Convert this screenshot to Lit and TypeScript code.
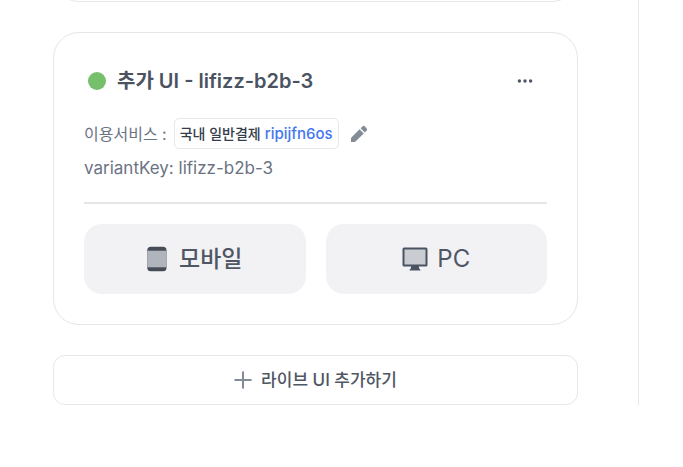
import { LitElement, html, css, svg } from "lit";
import { customElement, property } from "lit/decorators.js";

const icons = {
  more: svg`<svg width="18" height="18" viewBox="0 0 18 18" fill="currentColor" aria-hidden="true"><circle cx="3.4" cy="9" r="1.700"/><circle cx="9" cy="9" r="1.700"/><circle cx="14.600" cy="9" r="1.700"/></svg>`,
  pencil: svg`<svg width="18" height="18" viewBox="0 0 18 18" fill="currentColor" aria-hidden="true"><path d="M1 17v-3.500q0-.6.4-1L9.600 4.300 13.700 8.400l-8.200 8.200q-.4.4-1 .4z"/><path d="M10.600 3.300 12.600 1.300q1-.9 2 0l2.100 2.100q.9 1 0 2l-2 2z"/></svg>`,
  phone: svg`<svg width="20" height="26" viewBox="0 0 20 26" aria-hidden="true"><rect x=".3" y=".8" width="19.200" height="24.500" rx="3.500" fill="#464c58"/><path d="M.3 4.700h19.200v16.600H.3z" fill="#b0b4bd"/></svg>`,
  monitor: svg`<svg width="26" height="24" viewBox="0 0 26 24" aria-hidden="true"><path d="M9.500 18h7l.8 3.700q1.200.3 1.200 1.900h-11q0-1.600 1.200-1.900z" fill="#4a5361"/><rect x="1.500" y="1.600" width="23" height="17" rx=".6" fill="#c9cdd2" stroke="#4a5361" stroke-width="2"/></svg>`,
  plus: svg`<svg width="18" height="18" viewBox="0 0 18 18" fill="none" stroke="currentColor" stroke-width="2" stroke-linecap="round" aria-hidden="true"><path d="M1.200 9h15.600M9 1.200v15.600"/></svg>`,
};

const base = css`
  * { box-sizing: border-box; }
  button {
    margin: 0;
    padding: 0;
    border: 0;
    background: none;
    color: inherit;
    font: inherit;
    cursor: pointer;
  }
  svg { display: block; flex: none; }
`;

@customElement("ui-card")
class UiCard extends LitElement {
  @property() heading = "";
  @property() service = "";
  @property() code = "";
  @property() variant = "";

  static styles = [
    base,
    css`
      :host {
        display: block;
        padding: 30px;
        border: 1px solid #e5e6e8;
        border-radius: 26px;
        background: #fff;
      }
      .head {
        display: flex;
        align-items: center;
        height: 36px;
        padding: 0 13px 0 4px;
        gap: 11px;
      }
      .dot {
        width: 18px;
        height: 18px;
        border-radius: 50%;
        background: #75bf6d;
      }
      h2 {
        flex: 1;
        margin: 0;
        font-size: 20px;
        line-height: 30px;
        font-weight: 600;
        color: #4b5361;
      }
      .more { color: #4e5463; padding: 4px 0; }
      .info {
        margin-top: 19px;
        font-size: 16px;
        line-height: 24px;
        color: #6b7382;
      }
      .row { display: flex; align-items: center; gap: 7px; }
      .chip {
        display: flex;
        align-items: center;
        gap: 4px;
        height: 31px;
        padding: 0 5px;
        border: 1px solid #e5e6e8;
        border-radius: 5px;
        font-size: 14px;
        font-weight: 500;
        color: #333d4b;
      }
      .chip a { color: #4477ee; text-decoration: none; font-size: 15px; }
      .edit { margin-left: 4px; color: #828b96; }
      .variant { margin: 7px 0 0; font-size: 17px; }
      hr {
        height: 2px;
        margin: 22px 0 20px;
        border: 0;
        background: #e5e6e8;
      }
      .devices { display: grid; grid-template-columns: 1fr 1fr; gap: 20px; }
      .device {
        display: flex;
        align-items: center;
        justify-content: center;
        gap: 12px;
        height: 70px;
        border-radius: 18px;
        background: #f2f2f5;
        font-size: 23px;
        line-height: 36px;
        font-weight: 500;
        color: #505764;
      }
      .pc { gap: 9px; font-size: 24px; font-weight: 400; }
    `,
  ];

  render() {
    return html`
      <div class="head">
        <span class="dot"></span>
        <h2>${this.heading}</h2>
        <button class="more" aria-label="더보기">${icons.more}</button>
      </div>
      <div class="info">
        <div class="row">
          <span>이용서비스 :</span>
          <span class="chip"><span>${this.service}</span><a href="#service">${this.code}</a></span>
          <button class="edit" aria-label="수정">${icons.pencil}</button>
        </div>
        <p class="variant">variantKey: ${this.variant}</p>
      </div>
      <hr />
      <div class="devices">
        <button class="device">${icons.phone}<span>모바일</span></button>
        <button class="device pc">${icons.monitor}<span>PC</span></button>
      </div>
    `;
  }
}

@customElement("app-root")
class AppRoot extends LitElement {
  static styles = [
    base,
    css`
      :host {
        display: block;
        background: #fff;
        font-family: Inter, "Noto Sans CJK KR", sans-serif;
      }
      main {
        display: flex;
        flex-direction: column;
        gap: 30px;
        margin-right: 44px;
        padding: 0 60px 0 53px;
        border-right: 1px solid #e5e6e8;
      }
      .previous {
        display: flex;
        flex-direction: column;
        justify-content: flex-end;
        height: 2px;
        overflow: hidden;
      }
      .previous-card {
        flex: none;
        height: 60px;
        border: 1px solid #e5e6e8;
        border-radius: 26px;
      }
      .add {
        display: flex;
        align-items: center;
        justify-content: center;
        gap: 9px;
        height: 50px;
        padding-bottom: 1px;
        border: 1px solid #e5e6e8;
        border-radius: 12px;
        font-size: 17px;
        line-height: 26px;
        font-weight: 500;
        color: #505764;
      }
      .add svg { color: #828b96; }
    `,
  ];

  render() {
    return html`
      <main>
        <div class="previous"><div class="previous-card"></div></div>
        <ui-card
          heading="추가 UI - lifizz-b2b-3"
          service="국내 일반결제"
          code="ripijfn6os"
          variant="lifizz-b2b-3"
        ></ui-card>
        <button class="add">${icons.plus}<span>라이브 UI 추가하기</span></button>
      </main>
    `;
  }
}
